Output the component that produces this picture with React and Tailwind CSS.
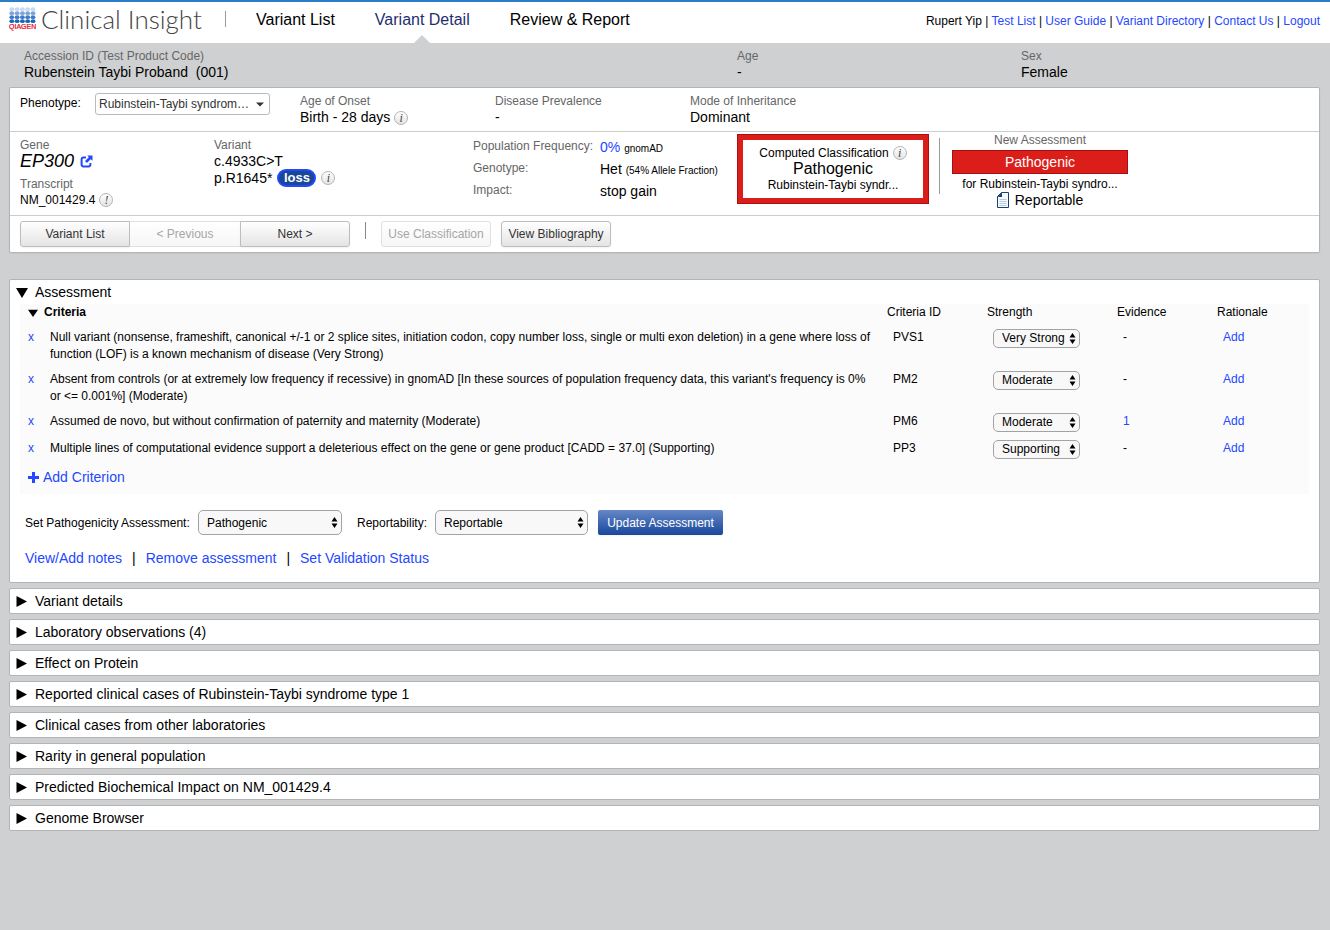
import React, { useState } from 'react';

const userLinks = ['Test List', 'User Guide', 'Variant Directory', 'Contact Us', 'Logout'];

const initialCriteria = [
  {
    id: 'PVS1',
    text: 'Null variant (nonsense, frameshift, canonical +/-1 or 2 splice sites, initiation codon, copy number loss, single or multi exon deletion) in a gene where loss of function (LOF) is a known mechanism of disease (Very Strong)',
    strength: 'Very Strong',
    evidence: 0,
  },
  {
    id: 'PM2',
    text: "Absent from controls (or at extremely low frequency if recessive) in gnomAD [In these sources of population frequency data, this variant's frequency is 0% or <= 0.001%] (Moderate)",
    strength: 'Moderate',
    evidence: 0,
  },
  {
    id: 'PM6',
    text: 'Assumed de novo, but without confirmation of paternity and maternity (Moderate)',
    strength: 'Moderate',
    evidence: 1,
  },
  {
    id: 'PP3',
    text: 'Multiple lines of computational evidence support a deleterious effect on the gene or gene product [CADD = 37.0] (Supporting)',
    strength: 'Supporting',
    evidence: 0,
  },
];

const strengths = ['Very Strong', 'Strong', 'Moderate', 'Supporting'];

const sections = [
  'Variant details',
  'Laboratory observations (4)',
  'Effect on Protein',
  'Reported clinical cases of Rubinstein-Taybi syndrome type 1',
  'Clinical cases from other laboratories',
  'Rarity in general population',
  'Predicted Biochemical Impact on NM_001429.4',
  'Genome Browser',
];

const Logo = () => (
  <svg width="27" height="24" viewBox="0 0 27 24" role="img" aria-label="QIAGEN">
    {['#c3dcf3', '#7ea2d8', '#3f78c6', '#1767b8'].map((color, row) =>
      [0, 1, 2, 3, 4].map((col) => (
        <ellipse key={`${row}-${col}`} cx={2.8 + col * 5.3} cy={2.2 + row * 4} rx="2.4" ry="1.9" fill={color} />
      ))
    )}
    <text x="0" y="22" fontSize="7" fill="#e2001a" stroke="#e2001a" strokeWidth="0.2">QIAGEN</text>
  </svg>
);

const InfoIcon = ({ mark = 'i' }) => (
  <span className="inline-flex h-[14px] w-[14px] shrink-0 items-center justify-center rounded-full border border-[#b4b4b4] bg-linear-to-b from-white to-[#e4e4e4] font-['Liberation_Serif',serif] text-[12px] leading-none text-[#444] italic">
    {mark}
  </span>
);

const Triangle = ({ open, small }) => (
  <svg width={small ? 10 : 12} height={small ? 8 : 11} viewBox="0 0 12 11" preserveAspectRatio="none" aria-hidden="true">
    <path d={open ? 'M0 1H12L6 11Z' : 'M0.5 0V11L11 5.5Z'} fill="#000" />
  </svg>
);

const ExternalIcon = () => (
  <svg width="13" height="13" viewBox="0 0 13 13" fill="none" aria-hidden="true">
    <path d="M6 2.6H3.4Q1.6 2.6 1.6 4.4V9.6Q1.6 11.4 3.4 11.4H8.6Q10.4 11.4 10.4 9.6V8" stroke="#2448ff" strokeWidth="2" />
    <path d="M7.3 0.5H12.5V5.7L10.7 4.2L6.9 8L5 6.1L8.8 2.3Z" fill="#2448ff" />
  </svg>
);

const DocIcon = () => (
  <svg width="12" height="16" viewBox="0 0 12 16" aria-hidden="true">
    <path d="M4.5 0.5H11.5V15.5H0.5V4.5Z" fill="#f4f9fd" stroke="#1c3f70" />
    <path d="M5 0.5V5H0.5Z" fill="#1c3f70" />
    <path d="M2.5 7.5H9.5M2.5 9.5H9.5M2.5 11.5H9.5M2.5 13.5H9.5" stroke="#b9cad8" />
  </svg>
);

const SelectBox = ({ children, size, className, ...props }) => (
  <div className={`relative ${className}`}>
    <select
      {...props}
      className={`block w-full appearance-none rounded-[5px] border border-[#a3a3a3] bg-[#f8f8f8] pl-2 text-xs text-black ${
        size === 'sm' ? 'h-[19px] leading-[17px]' : 'h-[25px] leading-[22px]'
      }`}
    >
      {children}
    </select>
    <svg
      className="pointer-events-none absolute inset-y-0 right-1 my-auto"
      width="7"
      height="11"
      viewBox="0 0 7 11"
      aria-hidden="true"
    >
      <path d="M3.5 0L6.5 4.6H0.5ZM3.5 11L6.5 6.4H0.5Z" fill="#000" />
    </svg>
  </div>
);

const Field = ({ label, className, children }) => (
  <div className={className}>
    <div className="text-xs leading-4 text-[#666]">{label}</div>
    <div className="flex items-center gap-1 text-sm leading-[17px]">{children}</div>
  </div>
);

const toolButton = 'h-[26px] w-[110px] border text-xs border-[#bdbdbd] bg-linear-to-b from-white to-[#e4e4e4] text-[#333] shadow-xs';
const toolButtonOff = 'h-[26px] w-[110px] border text-xs border-[#e0e0e0] bg-linear-to-b from-white to-[#f6f6f6] text-[#a6a6a6]';

const App = () => {
  const [criteria, setCriteria] = useState(initialCriteria);
  const [openSections, setOpenSections] = useState([]);
  const [assessment, setAssessment] = useState('Pathogenic');
  const [reportability, setReportability] = useState('Reportable');

  const removeCriterion = (id) => setCriteria(criteria.filter((c) => c.id !== id));

  const setStrength = (id, strength) =>
    setCriteria(criteria.map((c) => (c.id === id ? { ...c, strength } : c)));

  const toggleSection = (name) =>
    setOpenSections(
      openSections.includes(name) ? openSections.filter((s) => s !== name) : [...openSections, name]
    );

  return (
    <div className="min-h-screen bg-[#cfd0d2] font-['Liberation_Sans',Arial,sans-serif] text-xs text-black">
      {/* Header */}
      <header className="flex h-[43px] items-center border-t-2 border-[#2b7cc9] bg-white pr-[10px] pl-[9px]">
        <div className="flex items-center pb-[7px]">
          <Logo />
          <div className="ml-[5px] w-[160px] font-[Lato,sans-serif] text-[26px] leading-8 font-light whitespace-nowrap text-[#444]">
            Clinical Insight
          </div>
          <div className="ml-6 h-4 w-px bg-[#999]" />
        </div>
        <nav className="ml-[30px] flex h-full gap-10 text-base">
          <a href="#list" className="pt-[6px]">Variant List</a>
          <a href="#detail" aria-current="page" className="relative pt-[6px] text-[#1f2f6e]">
            Variant Detail
            <svg className="absolute inset-x-0 bottom-0 mx-auto" width="16" height="8" viewBox="0 0 16 8" aria-hidden="true">
              <path d="M0 8L8 0L16 8Z" fill="#cfd0d2" />
            </svg>
          </a>
          <a href="#report" className="pt-[6px]">Review &amp; Report</a>
        </nav>
        <div className="ml-auto pb-[3px] whitespace-nowrap">
          Rupert Yip
          {userLinks.map((link) => (
            <React.Fragment key={link}>
              {' | '}
              <a href="#user" className="text-[#2448ff]">{link}</a>
            </React.Fragment>
          ))}
        </div>
      </header>

      {/* Case info */}
      <div className="grid h-11 grid-cols-[713fr_284fr_309fr] pt-[5px] pl-6">
        <Field label="Accession ID (Test Product Code)">
          <span className="whitespace-pre">Rubenstein Taybi Proband  (001)</span>
        </Field>
        <Field label="Age">-</Field>
        <Field label="Sex">Female</Field>
      </div>

      <main className="pr-[10px] pb-8 pl-[9px]">
        {/* Variant summary */}
        <section className="rounded-xs border border-[#b2b4b6] bg-white shadow-xs">
          <div className="flex h-11 border-b border-[#ccc] px-[10px] pt-[5px]">
            <label htmlFor="phenotype" className="w-[75px] pt-[2px] leading-4">Phenotype:</label>
            <div className="relative h-[22px] w-[175px]">
              <select
                id="phenotype"
                className="h-[22px] w-full appearance-none rounded-[3px] border border-[#bbb] bg-white pl-[3px] text-xs text-[#333]"
              >
                <option>Rubinstein-Taybi syndrom…</option>
              </select>
              <svg className="pointer-events-none absolute inset-y-0 right-[6px] my-auto" width="8" height="5" viewBox="0 0 8 5" aria-hidden="true">
                <path d="M0 0.5H8L4 4.5Z" fill="#333" />
              </svg>
            </div>
            <Field label="Age of Onset" className="ml-[30px] w-[195px]">
              Birth - 28 days <InfoIcon />
            </Field>
            <Field label="Disease Prevalence" className="w-[195px]">-</Field>
            <Field label="Mode of Inheritance">Dominant</Field>
          </div>

          <div className="flex h-[84px] border-b border-[#ccc] px-[10px]">
            <div className="w-[194px] pt-[5px]">
              <div className="leading-4 text-[#666]">Gene</div>
              <div className="flex items-center gap-[6px] text-lg leading-4 italic">
                EP300
                <a href="#gene" aria-label="Open gene EP300"><ExternalIcon /></a>
              </div>
              <div className="mt-[7px] leading-4 text-[#666]">Transcript</div>
              <div className="flex items-center gap-1 leading-4">
                NM_001429.4 <InfoIcon mark="!" />
              </div>
            </div>

            <div className="w-[259px] pt-[5px] text-sm leading-4">
              <div className="text-xs leading-4 text-[#666]">Variant</div>
              <div>c.4933C&gt;T</div>
              <div className="flex items-center">
                p.R1645*
                <span className="ml-[5px] flex h-[18px] w-[39px] items-center justify-center rounded-full border-2 border-[#2448ff] bg-[#1b4797] text-[13px] font-bold text-white">
                  loss
                </span>
                <span className="ml-[5px] flex"><InfoIcon /></span>
              </div>
            </div>

            <dl className="grid w-[264px] auto-rows-[22px] grid-cols-[127px_1fr] content-start pt-[4px]">
              <dt className="leading-5 text-[#666]">Population Frequency:</dt>
              <dd className="text-sm leading-[22px]">
                <a href="#frequency" className="text-[#2448ff]">0%</a> <span className="text-[10px]">gnomAD</span>
              </dd>
              <dt className="leading-5 text-[#666]">Genotype:</dt>
              <dd className="text-sm leading-[22px]">
                Het <span className="text-[10px]">(54% Allele Fraction)</span>
              </dd>
              <dt className="leading-5 text-[#666]">Impact:</dt>
              <dd className="text-sm leading-[22px]">stop gain</dd>
            </dl>

            <div className="mt-[2px] h-[70px] w-[192px] border border-[#a80f12] bg-[#dc1e1b] p-[5px]">
              <div className="flex h-full flex-col items-center justify-center bg-white leading-4">
                <div className="flex items-center gap-1">
                  Computed Classification <InfoIcon />
                </div>
                <div className="text-base leading-4">Pathogenic</div>
                <div>Rubinstein-Taybi syndr...</div>
              </div>
            </div>

            <div className="mt-[6px] ml-[10px] h-14 w-px bg-[#999]" />

            <div className="ml-3 w-[176px] text-center leading-4">
              <div className="text-[#666]">New Assessment</div>
              <div className="mt-[2px] h-6 border border-[#a80f12] bg-[#dc1e1b] text-sm leading-[22px] text-white">
                Pathogenic
              </div>
              <div className="mt-[2px]">for Rubinstein-Taybi syndro...</div>
              <div className="flex items-center justify-center gap-[6px] text-sm leading-4">
                <DocIcon /> Reportable
              </div>
            </div>
          </div>

          <div className="flex px-[10px] py-[5px]">
            <button type="button" className={`${toolButton} rounded-l-[3px]`}>Variant List</button>
            <button type="button" disabled className={`${toolButtonOff} border-x-0`}>&lt; Previous</button>
            <button type="button" className={`${toolButton} rounded-r-[3px]`}>Next &gt;</button>
            <div className="mt-[1px] ml-[15px] h-[17px] w-px bg-[#888]" />
            <button type="button" disabled className={`${toolButtonOff} ml-[15px] rounded-[3px]`}>Use Classification</button>
            <button type="button" className={`${toolButton} ml-[10px] rounded-[3px]`}>View Bibliography</button>
          </div>
        </section>

        {/* Assessment */}
        <section className="mt-[26px] rounded-xs border border-[#b2b4b6] bg-white px-[10px] pb-4">
          <h2 className="-ml-1 flex h-6 items-center gap-[7px] text-sm">
            <Triangle open /> Assessment
          </h2>

          <div className="bg-[#fbfbfb] pb-2">
            <table className="w-full table-fixed text-left leading-[17px]">
              <thead>
                <tr className="h-[21px] align-top">
                  <th colSpan={2} className="pl-2">
                    <span className="flex items-center gap-[6px]"><Triangle open small /> Criteria</span>
                  </th>
                  <th className="w-[100px] font-normal">Criteria ID</th>
                  <th className="w-[130px] font-normal">Strength</th>
                  <th className="w-[100px] font-normal">Evidence</th>
                  <th className="w-[92px] font-normal">Rationale</th>
                </tr>
              </thead>
              <tbody>
                {criteria.map((c) => (
                  <tr key={c.id} className="align-top">
                    <td colSpan={2} className="py-1 pr-3 pl-2">
                      <div className="flex">
                        <button
                          type="button"
                          aria-label={`Remove ${c.id}`}
                          onClick={() => removeCriterion(c.id)}
                          className="h-[17px] w-[22px] shrink-0 text-left text-[#2448ff]"
                        >
                          x
                        </button>
                        <span>{c.text}</span>
                      </div>
                    </td>
                    <td className="py-1 pl-[6px]">{c.id}</td>
                    <td className="py-1 pl-[6px]">
                      <SelectBox
                        size="sm"
                        className="w-[87px]"
                        aria-label={`Strength of ${c.id}`}
                        value={c.strength}
                        onChange={(e) => setStrength(c.id, e.target.value)}
                      >
                        {strengths.map((s) => (
                          <option key={s}>{s}</option>
                        ))}
                      </SelectBox>
                    </td>
                    <td className="py-1 pl-[6px]">
                      {c.evidence ? <a href="#evidence" className="text-[#2448ff]">{c.evidence}</a> : '-'}
                    </td>
                    <td className="py-1 pl-[6px]">
                      <a href="#rationale" className="text-[#2448ff]">Add</a>
                    </td>
                  </tr>
                ))}
              </tbody>
            </table>
            <button type="button" className="mt-[6px] ml-2 flex items-center gap-1 text-sm leading-[17px] text-[#2448ff]">
              <svg width="11" height="11" viewBox="0 0 11 11" aria-hidden="true">
                <path d="M5.5 0V11M0 5.5H11" stroke="#2448ff" strokeWidth="3" />
              </svg>
              Add Criterion
            </button>
          </div>

          <div className="mt-4 flex items-center pl-[5px]">
            <label htmlFor="pathogenicity" className="w-[173px]">Set Pathogenicity Assessment:</label>
            <SelectBox
              id="pathogenicity"
              className="w-36"
              value={assessment}
              onChange={(e) => setAssessment(e.target.value)}
            >
              <option>Pathogenic</option>
              <option>Likely Pathogenic</option>
              <option>Uncertain Significance</option>
              <option>Likely Benign</option>
              <option>Benign</option>
            </SelectBox>
            <label htmlFor="reportability" className="ml-[15px] w-[78px]">Reportability:</label>
            <SelectBox
              id="reportability"
              className="w-[153px]"
              value={reportability}
              onChange={(e) => setReportability(e.target.value)}
            >
              <option>Reportable</option>
              <option>Not Reportable</option>
            </SelectBox>
            <button
              type="button"
              className="ml-[10px] h-[25px] w-[125px] rounded-xs bg-linear-to-b from-[#6488c6] to-[#1a469c] text-xs text-white shadow-xs"
            >
              Update Assessment
            </button>
          </div>

          <div className="mt-[15px] flex gap-[10px] pl-[5px] text-sm leading-4">
            <a href="#notes" className="text-[#2448ff]">View/Add notes</a>
            <span>|</span>
            <a href="#remove" className="text-[#2448ff]">Remove assessment</a>
            <span>|</span>
            <a href="#validation" className="text-[#2448ff]">Set Validation Status</a>
          </div>
        </section>

        {/* Collapsed sections */}
        <div className="mt-[5px] flex flex-col gap-[5px]">
          {sections.map((name) => (
            <section key={name} className="rounded-xs border border-[#b2b4b6] bg-white">
              <h2>
                <button
                  type="button"
                  aria-expanded={openSections.includes(name)}
                  onClick={() => toggleSection(name)}
                  className="flex h-6 w-full items-center gap-[7px] pl-[6px] text-sm"
                >
                  <Triangle open={openSections.includes(name)} /> {name}
                </button>
              </h2>
            </section>
          ))}
        </div>
      </main>
    </div>
  );
};

export default App;
